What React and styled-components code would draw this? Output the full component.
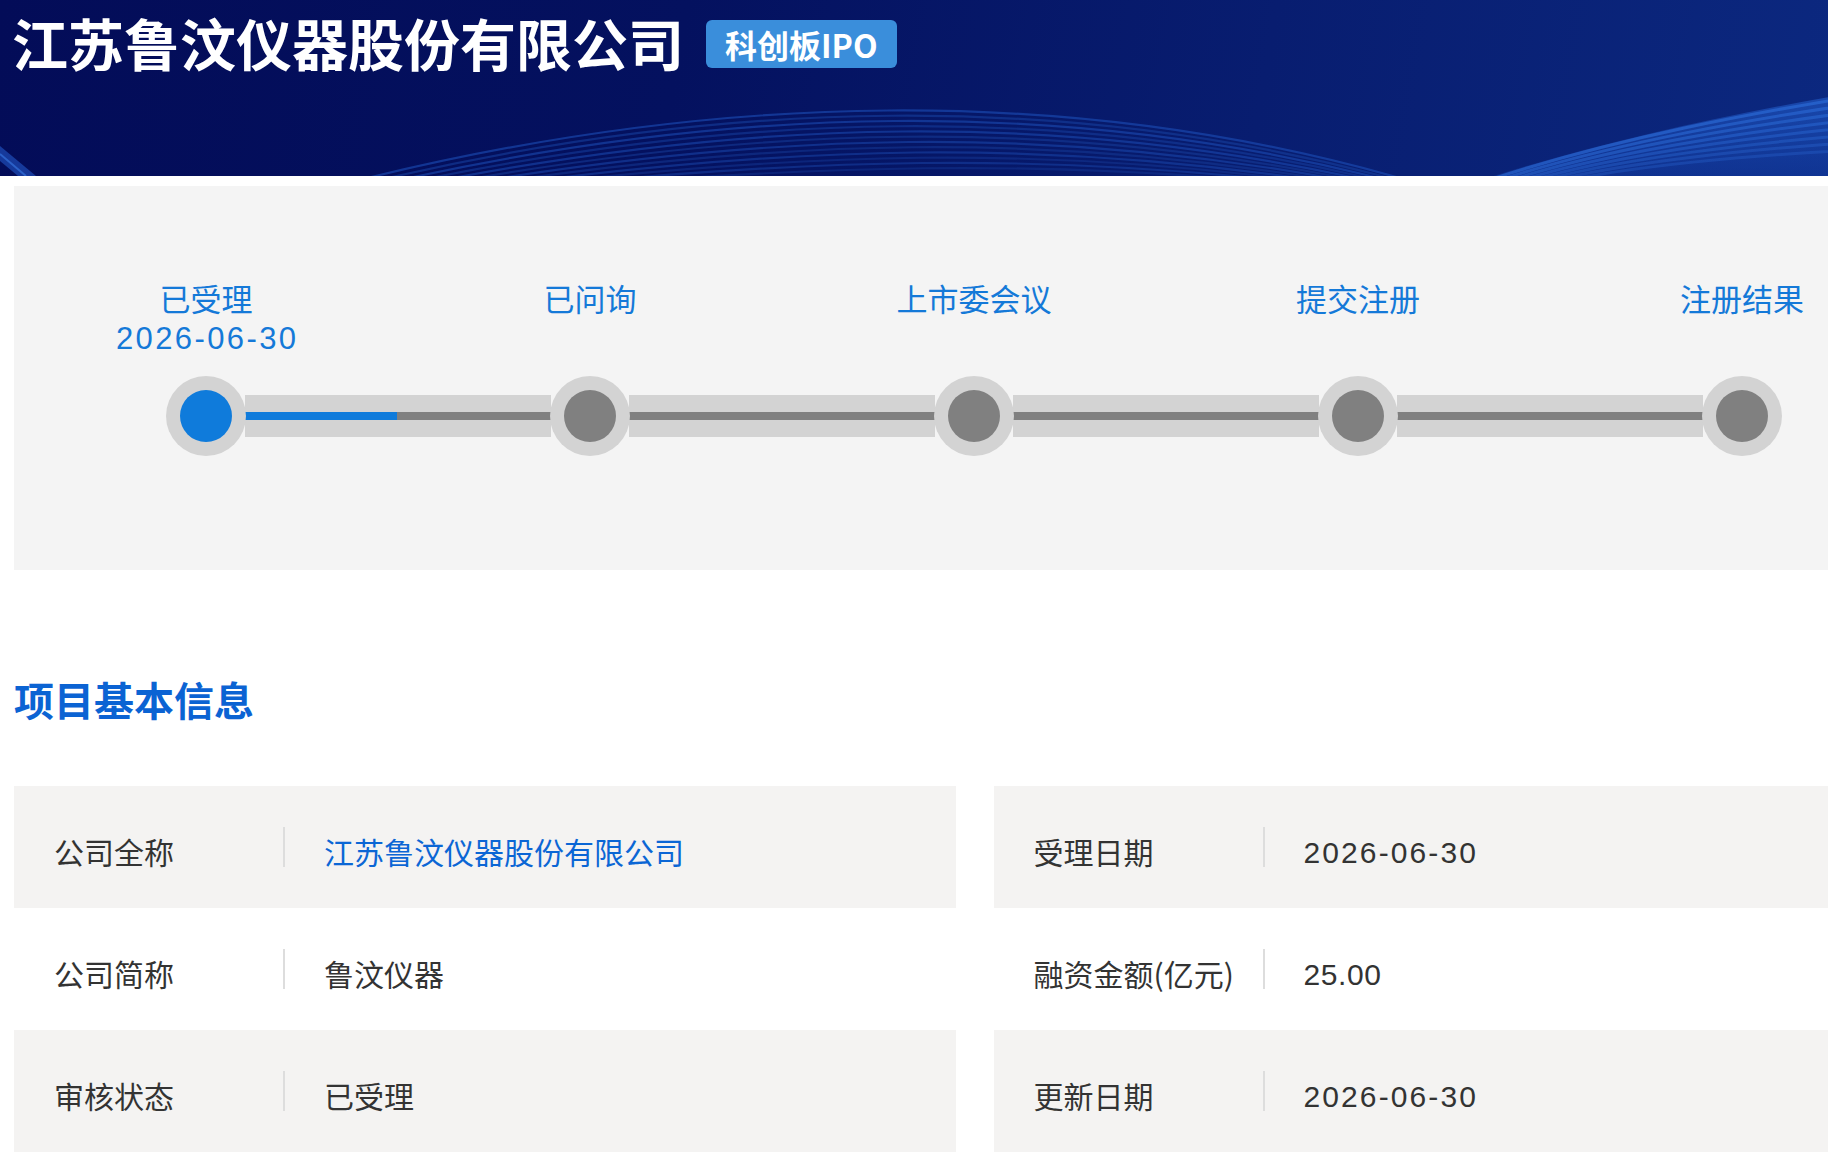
import React from "react";
import styled, { createGlobalStyle } from "styled-components";

const GlobalStyle = createGlobalStyle`
  html, body {
    margin: 0;
    padding: 0;
    background: #ffffff;
    overflow: hidden;
  }
  body {
    font-family: "Noto Sans CJK SC", "Noto Sans", sans-serif;
    color: #333333;
  }
  * { box-sizing: border-box; }
`;

const Page = styled.div`
  width: 1935px;
`;

const Header = styled.header`
  position: relative;
  height: 176px;
  overflow: hidden;
  background: linear-gradient(100deg, #030c58 0%, #04115f 35%, #081d70 65%, #0c2a82 100%);
`;

const HeaderDecor = styled.svg`
  position: absolute;
  left: 0;
  top: 0;
  width: 1935px;
  height: 176px;
  pointer-events: none;
`;

const HeaderBar = styled.div`
  position: relative;
  display: flex;
  align-items: center;
  gap: 22px;
  height: 86px;
  padding-left: 12px;
`;

const CompanyTitle = styled.h1`
  margin: 0;
  font-size: 56px;
  line-height: 60px;
  font-weight: 700;
  color: #ffffff;
  margin-top: -3px;
`;

const BoardBadge = styled.span`
  display: inline-flex;
  align-items: center;
  height: 48px;
  padding: 0 19px;
  border-radius: 6px;
  background: #3a8edb;
  color: #ffffff;
  font-size: 32px;
  font-weight: 600;
  line-height: 1;
  margin-top: 2px;
`;

const Main = styled.main`
  padding: 10px 0 0 14px;
`;

const ProgressPanel = styled.section`
  width: 1920px;
  padding: 96px 0 114px;
  background: #f4f4f4;
  display: grid;
  grid-template-columns: repeat(5, 384px);
`;

const Step = styled.div`
  display: flex;
  flex-direction: column;
  align-items: center;
`;

const StepText = styled.div`
  height: 76px;
  margin-bottom: 18px;
  display: flex;
  flex-direction: column;
  align-items: center;
  color: #1479d8;
  font-family: "Liberation Sans", "Noto Sans CJK SC", sans-serif;
  font-size: 31px;
`;

const StepName = styled.span`
  display: block;
  height: 38px;
  line-height: 38px;
`;

const StepDate = styled.span`
  display: block;
  height: 38px;
  line-height: 38px;
  letter-spacing: 2.4px;
  margin-right: -2.4px;
`;

const NodeRow = styled.div`
  width: 100%;
  height: 80px;
  display: flex;
  align-items: center;
`;

const Segment = styled.div`
  flex: 1;
  height: 42px;
  margin: 0 -1px;
  display: flex;
  align-items: center;
  background: ${(p) => (p.$hidden ? "transparent" : "#d3d3d3")};
`;

const SegmentLine = styled.div`
  width: 100%;
  height: 8px;
  background: ${(p) => (p.$active ? "#0f7bdb" : "#808080")};
`;

const NodeRing = styled.div`
  position: relative;
  width: 80px;
  height: 80px;
  border-radius: 50%;
  background: #d3d3d3;
  display: flex;
  align-items: center;
  justify-content: center;
  flex-shrink: 0;
`;

const NodeDot = styled.div`
  width: 52px;
  height: 52px;
  border-radius: 50%;
  background: ${(p) => (p.$active ? "#0f7bdb" : "#808080")};
`;

const SectionTitle = styled.h2`
  margin: 109px 0 67px 0;
  font-size: 40px;
  line-height: 40px;
  font-weight: 700;
  color: #0b63d3;
`;

const InfoGrid = styled.div`
  width: 1921px;
  display: grid;
  grid-template-columns: 1fr 1fr;
  column-gap: 38px;
`;

const InfoCell = styled.div`
  height: 122px;
  display: flex;
  align-items: center;
  padding-left: 40px;
  background: ${(p) => (p.$shaded ? "#f4f3f2" : "#ffffff")};
`;

const InfoLabel = styled.span`
  width: 229px;
  flex-shrink: 0;
  font-size: 30px;
  line-height: 40px;
  color: #333333;
  padding-top: 8px;
`;

const Divider = styled.span`
  width: 2px;
  height: 40px;
  background: #dddddd;
  flex-shrink: 0;
`;

const InfoValue = styled.span`
  margin-left: 39px;
  font-size: 30px;
  line-height: 40px;
  padding-top: ${(p) => (p.$spacing != null ? "12px" : "8px")};
  font-family: ${(p) =>
    p.$spacing != null
      ? '"Liberation Sans", "Noto Sans CJK SC", sans-serif'
      : '"Noto Sans CJK SC", "Noto Sans", sans-serif'};
  letter-spacing: ${(p) => (p.$spacing != null ? `${p.$spacing}px` : "0")};
  color: ${(p) => (p.$link ? "#0b66d5" : "#333333")};
`;

const steps = [
  { name: "已受理", date: "2026-06-30", active: true },
  { name: "已问询" },
  { name: "上市委会议" },
  { name: "提交注册" },
  { name: "注册结果" },
];

const infoRows = [
  [
    { label: "公司全称", value: "江苏鲁汶仪器股份有限公司", link: true },
    { label: "受理日期", value: "2026-06-30", spacing: 2.1 },
  ],
  [
    { label: "公司简称", value: "鲁汶仪器" },
    { label: "融资金额(亿元)", value: "25.00", spacing: 0.6 },
  ],
  [
    { label: "审核状态", value: "已受理" },
    { label: "更新日期", value: "2026-06-30", spacing: 2.1 },
  ],
];

function Waves() {
  const arches = [];
  for (let i = 0; i < 12; i++) {
    const y = 100 + i * 7;
    arches.push(
      <path
        key={"a" + i}
        d={`M ${320 + i * 18} 190 C ${700 + i * 10} ${y - 10}, ${1080 - i * 4} ${y - 22}, ${1440 - i * 8} 190`}
        fill="none"
        stroke={i % 2 === 0 ? "#1d4fb8" : "#173f9e"}
        strokeOpacity={0.6 - i * 0.02}
        strokeWidth="2.2"
      />
    );
  }
  const bands = [];
  for (let i = 0; i < 8; i++) {
    bands.push(
      <path
        key={"b" + i}
        d={`M ${1460 + i * 10} 190 C 1600 ${140 + i * 4}, 1760 ${110 + i * 6}, 1935 ${84 + i * 9}`}
        fill="none"
        stroke="#2f72e0"
        strokeOpacity={0.55 - i * 0.04}
        strokeWidth="3"
      />
    );
  }
  return (
    <HeaderDecor viewBox="0 0 1935 176" preserveAspectRatio="none" aria-hidden="true">
      <defs>
        <linearGradient id="bandFill" x1="0" y1="0" x2="0" y2="1">
          <stop offset="0" stopColor="#2a6ee0" stopOpacity="0.55" />
          <stop offset="1" stopColor="#1a4fc0" stopOpacity="0.25" />
        </linearGradient>
      </defs>
      <path d="M 1450 190 C 1600 140, 1760 106, 1935 80 L 1935 190 Z" fill="url(#bandFill)" />
      {arches}
      {bands}
      <path d="M 0 146 L 36 176 L 18 176 L 0 161 Z" fill="#2358c8" fillOpacity="0.6" />
      <path d="M 0 154 L 26 176" stroke="#3b7be6" strokeOpacity="0.6" strokeWidth="2" />
    </HeaderDecor>
  );
}

export default function App() {
  return (
    <Page>
      <GlobalStyle />
      <Header>
        <Waves />
        <HeaderBar>
          <CompanyTitle>江苏鲁汶仪器股份有限公司</CompanyTitle>
          <BoardBadge>科创板IPO</BoardBadge>
        </HeaderBar>
      </Header>
      <Main>
        <ProgressPanel>
          {steps.map((s, i) => (
            <Step key={s.name}>
              <StepText>
                <StepName>{s.name}</StepName>
                {s.date && <StepDate>{s.date}</StepDate>}
              </StepText>
              <NodeRow>
                <Segment $hidden={i === 0}>
                  {i !== 0 && <SegmentLine />}
                </Segment>
                <NodeRing>
                  <NodeDot $active={s.active} />
                </NodeRing>
                <Segment $hidden={i === steps.length - 1}>
                  {i !== steps.length - 1 && <SegmentLine $active={s.active} />}
                </Segment>
              </NodeRow>
            </Step>
          ))}
        </ProgressPanel>
        <SectionTitle>项目基本信息</SectionTitle>
        <InfoGrid>
          {infoRows.map((row, r) =>
            row.map((cell, c) => (
              <InfoCell key={`${r}-${c}`} $shaded={r % 2 === 0}>
                <InfoLabel>{cell.label}</InfoLabel>
                <Divider />
                <InfoValue $link={cell.link} $spacing={cell.spacing}>
                  {cell.value}
                </InfoValue>
              </InfoCell>
            ))
          )}
        </InfoGrid>
      </Main>
    </Page>
  );
}
